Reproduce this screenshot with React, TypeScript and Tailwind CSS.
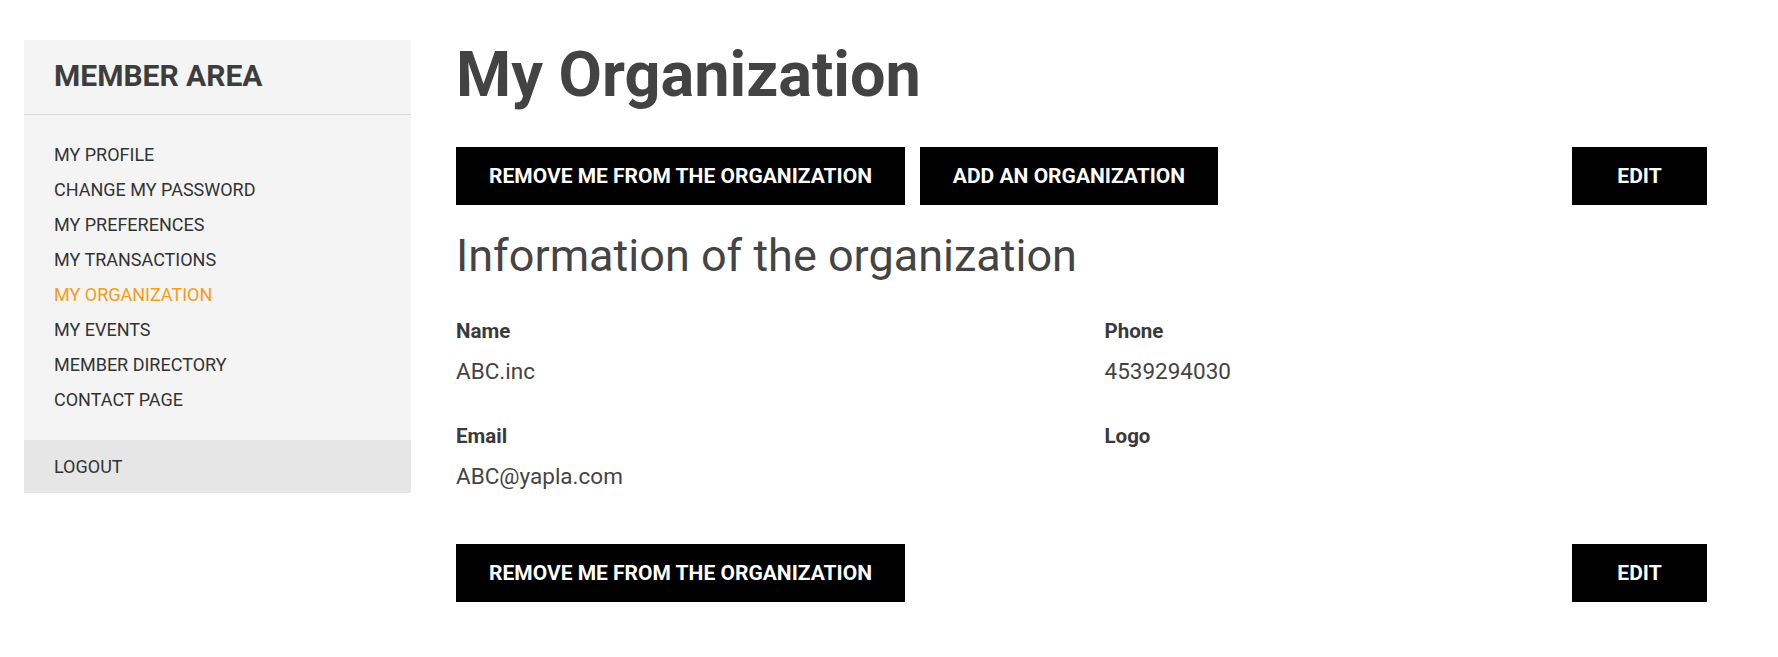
import React from "react";

const menu = [
  "MY PROFILE",
  "CHANGE MY PASSWORD",
  "MY PREFERENCES",
  "MY TRANSACTIONS",
  "MY ORGANIZATION",
  "MY EVENTS",
  "MEMBER DIRECTORY",
  "CONTACT PAGE",
];

function Btn({ label, w }: { label: string; w: string }) {
  return (
    <button
      className={`h-[58px] ${w} bg-black text-white font-bold text-[21px] leading-none flex items-center justify-center whitespace-nowrap`}
    >
      {label}
    </button>
  );
}

function Field({ label, value }: { label: string; value?: string }) {
  return (
    <div>
      <div className="text-[20.5px] leading-[24px] font-bold text-[#3a3a3a] -mt-[1px]">{label}</div>
      <div className="mt-[14.5px] h-[26px] text-[22.5px] leading-[26px] text-[#444]">{value}</div>
    </div>
  );
}

export default function App() {
  return (
    <div
      className="min-h-[657px] bg-white flex items-start pl-[24px] pt-[40px] pr-[71px] gap-[45px]"
      style={{ fontFamily: "Roboto, 'Noto Sans', Arial, sans-serif" }}
    >
      <aside className="w-[387px] shrink-0 bg-[#f4f4f4]">
        <div className="h-[75px] border-b border-[#d9d9d9] flex items-center pl-[30px]">
          <h2 className="text-[30px] leading-none font-bold text-[#3d3d3d] -mt-[2px]">MEMBER AREA</h2>
        </div>
        <nav className="pt-[22px] pb-[23px]">
          {menu.map((m) => (
            <div
              key={m}
              className={`pl-[30px] text-[18px] leading-[35px] ${
                m === "MY ORGANIZATION" ? "text-[#f39c1f]" : "text-[#333]"
              }`}
            >
              {m}
            </div>
          ))}
        </nav>
        <div className="h-[53px] bg-[#e6e6e6] flex items-center pl-[30px] text-[18px] text-[#333]">
          LOGOUT
        </div>
      </aside>

      <main className="flex-1 pt-[3px]">
        <h1 className="text-[63px] leading-[63px] font-bold text-[#434343]">My Organization</h1>

        <div className="mt-[41px] flex items-center gap-[15px]">
          <Btn label="REMOVE ME FROM THE ORGANIZATION" w="w-[449px]" />
          <Btn label="ADD AN ORGANIZATION" w="w-[298px]" />
          <div className="flex-1" />
          <Btn label="EDIT" w="w-[135px]" />
        </div>

        <h2 className="mt-[24px] text-[45px] leading-[54px] text-[#444]">Information of the organization</h2>

        <div className="mt-[37px] grid grid-cols-2 gap-x-[46px] gap-y-[41.5px]">
          <Field label="Name" value="ABC.inc" />
          <Field label="Phone" value="4539294030" />
          <Field label="Email" value="ABC@yapla.com" />
          <Field label="Logo" />
        </div>

        <div className="mt-[55.5px] flex items-center justify-between">
          <Btn label="REMOVE ME FROM THE ORGANIZATION" w="w-[449px]" />
          <Btn label="EDIT" w="w-[135px]" />
        </div>
      </main>
    </div>
  );
}
